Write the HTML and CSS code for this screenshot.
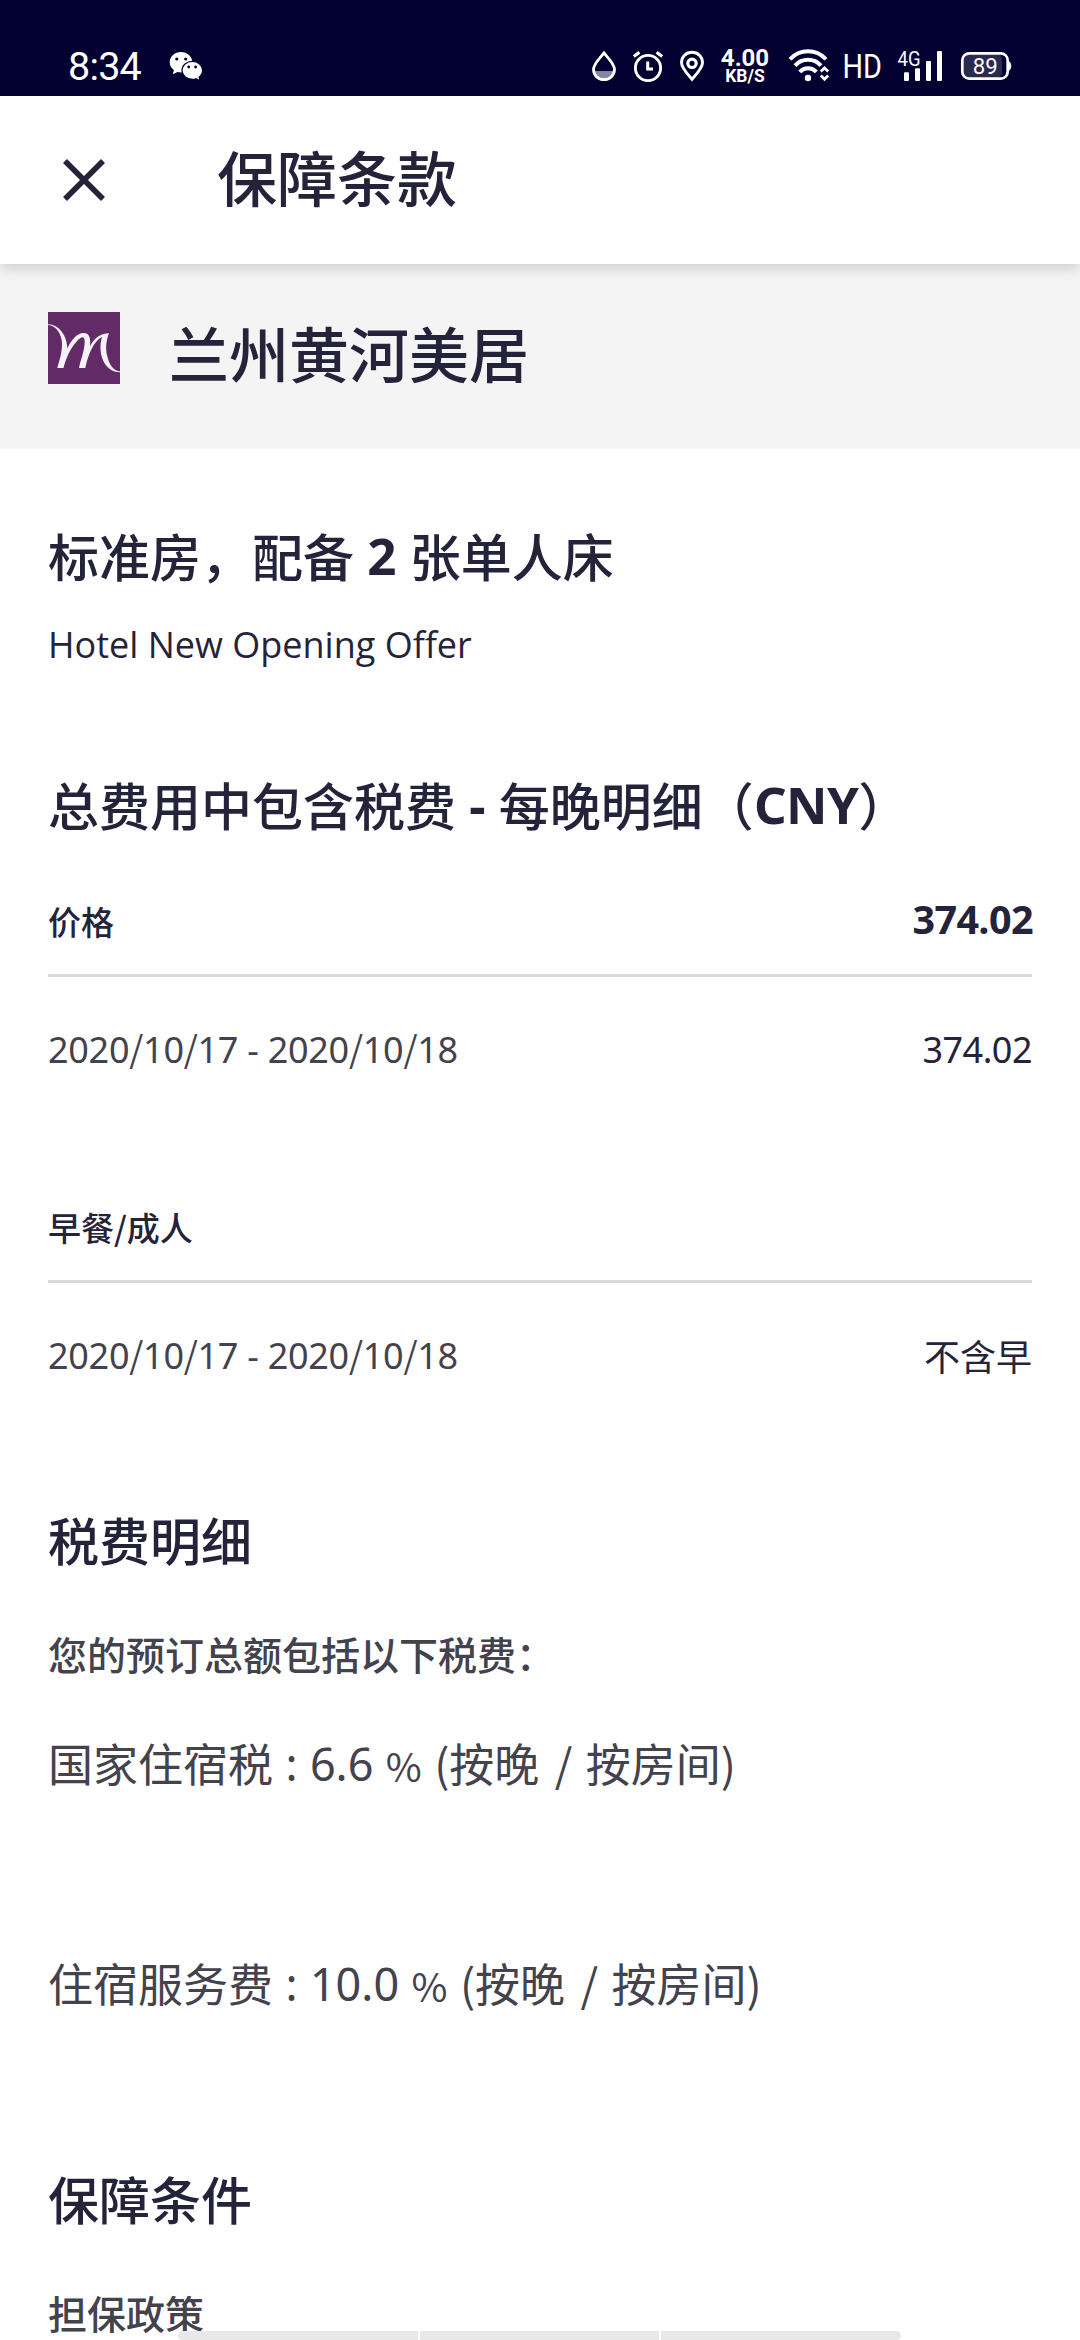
FILE: index.html
```html
<!DOCTYPE html>
<html lang="zh-CN">
<head>
<meta charset="utf-8">
<title>保障条款</title>
<link rel="stylesheet" href="styles.css">
</head>
<body>
<div class="status">
  <span class="clock">8:34</span>
  <svg class="wechat" width="36" height="34" viewBox="169 50 36 34">
    <path d="M181 52c-6.300 0-11.300 4.400-11.300 10.200 0 3.300 1.700 6 4.200 7.900l-1.200 4.100 4.700-2.300c1.100.3 2.300.5 3.600.5 6.300 0 11.300-4.500 11.300-10.200S187.300 52 181 52z" fill="#fff"/>
    <path d="M192.300 61.300c-5.700 0-10.300 4-10.300 9s4.600 9 10.300 9c1.400 0 2.500-.2 3.600-.6l4.300 2.100-1.100-3.700c2.200-1.700 3.500-4.100 3.500-6.800 0-5-4.600-9-10.300-9z" fill="#fff" stroke="#020030" stroke-width="1.200"/>
    <g fill="#020030"><circle cx="176.800" cy="59" r="1.600"/><circle cx="185.700" cy="59" r="1.600"/><circle cx="188.700" cy="67" r="1.400"/><circle cx="195.600" cy="67" r="1.400"/></g>
  </svg>
  <div class="tray">
    <svg width="26" height="34" viewBox="592 50 26 34">
      <path d="M594.500 71h21c-.7 5-5 9-10.500 9s-9.800-4-10.500-9z" fill="#8684a0"/>
      <path d="M605 53c-4.500 5.400-10.500 11-10.500 16.300 0 6 4.700 10.400 10.500 10.400s10.500-4.400 10.500-10.400C615.500 64 609.500 58.400 605 53z" fill="none" stroke="#fff" stroke-width="2.800"/>
    </svg>
    <svg width="32" height="34" viewBox="633 50 32 34" fill="none" stroke="#fff">
      <circle cx="649" cy="68" r="12.600" stroke-width="2.900"/>
      <path d="M648.700 61.500V69h5.300" stroke-width="3"/>
      <path d="M634.800 56.500l5.600-4.300M663.200 56.500l-5.600-4.300" stroke-width="3.200"/>
    </svg>
    <svg width="26" height="34" viewBox="680 50 26 34" fill="none" stroke="#fff">
      <path d="M693 79.200c-4.500-5.200-10.500-11-10.500-16.700 0-5.800 4.700-10.200 10.500-10.200s10.500 4.400 10.500 10.200c0 5.700-6 11.500-10.500 16.700z" stroke-width="2.900"/>
      <circle cx="693" cy="63.300" r="4.200" stroke-width="3.200"/>
    </svg>
    <div class="speed"><span class="speed-value">4.00</span><span class="speed-unit">KB/S</span></div>
    <svg width="42" height="34" viewBox="788 50 42 34" fill="none" stroke="#fff">
      <path d="M790 59.300a24 24 0 0 1 36 0" stroke-width="4"/>
      <path d="M795 65.600a17.500 17.500 0 0 1 26 0" stroke-width="4"/>
      <path d="M799.800 72a11 11 0 0 1 16.500 0" stroke-width="4"/>
      <circle cx="808" cy="78" r="3.200" fill="#fff" stroke="none"/>
      <path d="M820.800 71.500l3.700-3.600 3.700 3.600M820.800 75.500l3.700 3.800 3.700-3.800" stroke-width="2.800"/>
    </svg>
    <svg class="hd" width="41" height="34" viewBox="842 50 41 34"><text x="842.500" y="78" font-size="33" textLength="39.500" lengthAdjust="spacingAndGlyphs">HD</text></svg>
    <svg class="signal" width="46" height="34" viewBox="897 50 46 34" fill="#fff">
      <text x="897.500" y="66" font-size="20.500" textLength="23" lengthAdjust="spacingAndGlyphs">4G</text>
      <rect x="904" y="72.300" width="5" height="8.700" rx="1"/><rect x="915" y="68.300" width="5" height="12.700" rx="1"/><rect x="926" y="61" width="5" height="20" rx="1"/><rect x="937" y="51" width="5" height="30" rx="1"/>
    </svg>
    <svg class="battery" width="52" height="34" viewBox="960 50 52 34">
      <rect x="963" y="54" width="39" height="24" rx="5" fill="#2b2950"/>
      <rect x="962.300" y="53.300" width="45.400" height="25.400" rx="7" fill="none" stroke="#fff" stroke-width="2.700"/>
      <path d="M1008.500 61.500c3 1 3 8 0 9z" fill="#fff" stroke="#fff"/>
      <text x="972.700" y="73.500" font-size="22" textLength="25" lengthAdjust="spacingAndGlyphs">89</text>
    </svg>
  </div>
</div>

<header class="bar">
  <svg class="close" width="42" height="42" viewBox="0 0 42 42"><path d="M2 2l38 38M40 2L2 40" stroke="#25233a" stroke-width="5.600"/></svg>
  <h1 class="bar-title">保障条款</h1>
</header>

<section class="hotel">
  <svg class="logo" width="72" height="72" viewBox="0 0 72 72">
    <rect width="72" height="72" fill="#622b68"/>
    <path fill="#f7f2f7" d="M0 12.200C11 12.500 19 23 19.300 36.500 23.500 27.500 29 21 35.500 21c5.500 0 7.300 4 6.500 13.500C45.500 27 52 21.500 61 21.300 57.500 30 57.500 39 59.500 45c2 8 6 14 12.500 14.300v.9C60 60.500 52.500 48.500 52.500 36c0-4 .4-8 1.600-11C46 29 40.500 41 37.300 56H31c1.500-8 5.500-17 5.700-26 .1-7-3.700-5.500-7.200-1.500C22.500 36 18 46 15.500 56H9.300c2.200-8 4.700-15 4.700-24C14 22 8 13.500 0 13z"/>
  </svg>
  <h2 class="hotel-name">兰州黄河美居</h2>
</section>

<main class="content">
  <h3 class="heading">标准房，配备<span class="latin"> 2 </span>张单人床</h3>
  <p class="offer">Hotel New Opening Offer</p>

  <h3 class="heading breakdown">总费用中包含税费<span class="latin"> - </span>每晚明细（<span class="latin tight">CNY</span>）</h3>
  <div class="table">
    <div class="table-head"><span class="label">价格</span><span class="total">374.02</span></div>
    <div class="table-row"><span class="dates">2020<i>/</i>10<i>/</i>17 - 2020<i>/</i>10<i>/</i>18</span><span class="amount">374.02</span></div>
  </div>
  <div class="table breakfast">
    <div class="table-head"><span class="label">早餐/成人</span></div>
    <div class="table-row"><span class="dates">2020<i>/</i>10<i>/</i>17 - 2020<i>/</i>10<i>/</i>18</span><span class="meal">不含早</span></div>
  </div>

  <h3 class="heading taxes">税费明细</h3>
  <p class="note">您的预订总额包括以下税费：</p>
  <p class="tax">国家住宿税<span class="num"> : 6.6 </span><span class="percent">%</span><span class="num"> </span>(按晚<span class="num"> </span><span class="slash">/</span><span class="num"> </span>按房间)</p>
  <p class="tax service">住宿服务费<span class="num"> : 10.0 </span><span class="percent">%</span><span class="num"> </span>(按晚<span class="num"> </span><span class="slash">/</span><span class="num"> </span>按房间)</p>

  <h3 class="heading guarantee">保障条件</h3>
  <p class="note">担保政策</p>
</main>
<div class="nav-hint"><span></span><span></span><span></span></div>
</body>
</html>
```
FILE: styles.css
```css
* { box-sizing: border-box; margin: 0; padding: 0; }

body {
  width: 1080px;
  height: 2340px;
  overflow: hidden;
  position: relative;
  background: #fff;
  color: #25233a;
  font-family: "Noto Sans CJK SC", sans-serif;
}

svg { display: block; flex: none; overflow: visible; }
svg text { font-family: Roboto, sans-serif; fill: #fff; }

/* Status bar */
.status {
  display: flex;
  align-items: flex-start;
  height: 96px;
  padding: 50px 68px 0;
  background: #020030;
  color: #fff;
  font-family: Roboto, sans-serif;
}
.clock { width: 101px; font-size: 39.5px; line-height: 33px; letter-spacing: -.8px; }
.tray { display: flex; margin-left: auto; }
.tray svg + svg { margin-left: 15px; }
.speed {
  display: flex;
  flex-direction: column;
  align-items: center;
  width: 50px;
  margin: 0 18px 0 15px;
  font-weight: 700;
}
.speed-value { font-size: 24px; line-height: 16px; }
.speed-unit { font-size: 17.5px; line-height: 21px; }
.tray .hd { margin-left: 12px; }
.tray .signal { margin-left: 14px; }
.tray .battery { margin-left: 17px; }

/* App bar */
.bar {
  position: relative;
  display: flex;
  align-items: center;
  height: 168px;
  padding-left: 63px;
  background: #fff;
  box-shadow: 0 4px 14px rgba(0, 0, 0, .17);
}
.bar-title { margin: -9px 0 0 112px; font-size: 60px; line-height: 80px; font-weight: 500; }

/* Hotel banner */
.hotel {
  display: flex;
  align-items: flex-start;
  height: 185px;
  padding: 48px 48px 0;
  background: #f4f4f4;
}
.hotel-name { margin-left: 49px; font-size: 60px; line-height: 80px; font-weight: 500; }

/* Terms */
.content { padding: 71px 48px 0; }
.heading { font-size: 51px; line-height: 70px; font-weight: 500; white-space: pre; }
.latin {
  position: relative;
  top: -2px;
  font-family: "Noto Sans", sans-serif;
  font-weight: 700;
  line-height: 1;
}
.tight { letter-spacing: -.6px; }
.offer { margin-top: 35px; font: 36px/40px "Open Sans", sans-serif; }
.breakdown { margin-top: 104px; }

.table { margin-top: 42px; }
.table-head {
  display: flex;
  justify-content: space-between;
  height: 96px;
  padding-top: 20px;
  border-bottom: 3px solid #dadadb;
}
.label { font-size: 33px; line-height: 40px; font-weight: 500; }
.total { font: 700 39.5px/36px "Open Sans", sans-serif; letter-spacing: -.6px; margin-right: -1px; }
.table-row { display: flex; justify-content: space-between; margin-top: 37px; line-height: 72px; font-size: 36px; }
.dates { color: #43424d; font-family: "Noto Sans", sans-serif; letter-spacing: -.28px; }
.dates i { font-style: normal; font-family: "Noto Sans CJK SC", sans-serif; line-height: 1; }
.amount { font-family: "Noto Sans", sans-serif; letter-spacing: -.5px; }
.meal { position: relative; top: -1px; }
.breakfast { margin-top: 101px; }

.taxes { margin-top: 112px; }
.note { margin-top: 54px; color: #43424d; font-size: 39px; line-height: 50px; font-weight: 500; }
.tax { margin-top: 55px; color: #43424d; font-size: 45px; line-height: 60px; white-space: pre; }
.num { position: relative; top: -1px; font-family: "Noto Sans", sans-serif; word-spacing: .7px; line-height: 1; }
.percent { font-size: 39px; line-height: 1; }
.slash { margin: 0 1px 0 3px; }
.service { margin-top: 160px; }
.guarantee { margin-top: 150px; }

/* Gesture hint overlaid on the bottom edge */
.nav-hint {
  position: absolute;
  left: 178px;
  bottom: 0;
  display: flex;
  gap: 2px;
  width: 723px;
  height: 9px;
  border-radius: 5px;
  overflow: hidden;
}
.nav-hint span { flex: 1; background: #e8e8e8; }
```
